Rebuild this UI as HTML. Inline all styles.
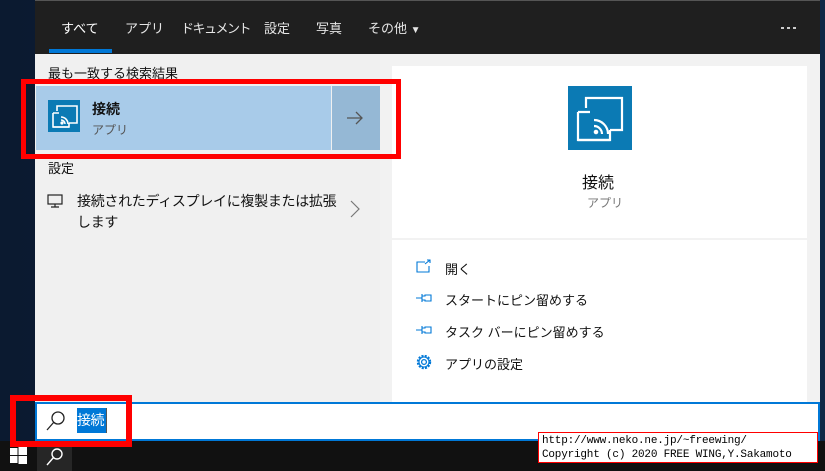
<!DOCTYPE html>
<html><head><meta charset="utf-8"><style>
*{margin:0;padding:0;box-sizing:border-box}
body{width:825px;height:471px;overflow:hidden;position:relative;background:linear-gradient(90deg,#0b1a30,#0f2745);font-family:"Liberation Sans","Noto Sans CJK JP",sans-serif}
.a{position:absolute}
.top{left:35px;top:0;width:785px;height:54px;background:#1f1f1f;border-top:1px solid #555}
.tab{position:absolute;top:17px;color:#e6e6e6;font-size:13px;white-space:nowrap}
.left{left:35px;top:54px;width:345px;height:350px;background:#f0f0f0}
.right{left:380px;top:54px;width:440px;height:350px;background:#f2f2f2}
.card{background:#fff}
.t{position:absolute;white-space:nowrap;color:#111}
</style></head><body>
<div class="a top">
 <div class="tab" style="left:26px;color:#fff">すべて</div>
 <div class="a" style="left:14px;top:48px;width:63px;height:4px;background:#0078d7"></div>
 <div class="tab" style="left:90px">アプリ</div>
 <div class="tab" style="left:146px;letter-spacing:-1.5px">ドキュメント</div>
 <div class="tab" style="left:229px">設定</div>
 <div class="tab" style="left:281px">写真</div>
 <div class="tab" style="left:333px">その他 <span style="font-size:10px">▼</span></div>
 <div class="a" style="left:746px;top:26px;width:3px;height:2px;background:#ccc;box-shadow:6px 0 #ccc,12px 0 #ccc"></div>
</div>
<div class="a left">
 <div class="t" style="left:13px;top:9px;font-size:13px">最も一致する検索結果</div>
 <div class="a" style="left:1px;top:32px;width:295px;height:64px;background:#a8cbe9"></div>
 <div class="a" style="left:297px;top:32px;width:48px;height:64px;background:#95b8d5"></div>
 <svg class="a" style="left:310px;top:55px" width="20" height="18" viewBox="0 0 20 18"><path d="M2 9H17M11 3l6 6-6 6" stroke="#555" stroke-width="1.3" fill="none"/></svg>
 <div class="a" style="left:13px;top:46px;width:32px;height:32px;background:#0b7ab4">
  <svg width="32" height="32" viewBox="0 0 32 32" fill="none" stroke="#fff" stroke-width="1.6"><path d="M9 11V6H29V23H21"/><path d="M5 13V27H21V23"/><path d="M5 13H11M5 27H21"/><path d="M13 17a7 7 0 0 1 7 7M13 20a4 4 0 0 1 4 4"/><circle cx="14" cy="23" r=".8" fill="#fff"/></svg>
 </div>
 <div class="t" style="left:57px;top:45px;font-size:14px;font-weight:bold">接続</div>
 <div class="t" style="left:57px;top:67px;font-size:12px;color:#555">アプリ</div>
 <div class="t" style="left:13px;top:104px;font-size:13px">設定</div>
 <svg class="a" style="left:12px;top:140px" width="16" height="14" viewBox="0 0 16 14" fill="none" stroke="#222" stroke-width="1.2"><rect x="1" y="1" width="14" height="9"/><path d="M8 10v3M4 13h8"/></svg>
 <div class="t" style="left:42px;top:137px;font-size:14px;line-height:21px;letter-spacing:-0.3px">接続されたディスプレイに複製または拡張<br>します</div>
 <svg class="a" style="left:315px;top:146px" width="10" height="18" viewBox="0 0 10 18"><path d="M1 1l8 8-8 8" stroke="#777" stroke-width="1.2" fill="none"/></svg>
</div>
<div class="a right">
 <div class="a card" style="left:12px;top:12px;width:415px;height:172px">
  <div class="a" style="left:176px;top:20px;width:64px;height:64px;background:#0b7ab4">
   <svg width="64" height="64" viewBox="0 0 32 32" fill="none" stroke="#fff" stroke-width="1.1"><path d="M9 11V6H27V22H21"/><path d="M5 13V27H21V22"/><path d="M5 13H11M5 27H21"/><path d="M13 17a7 7 0 0 1 7 7M13 20a4 4 0 0 1 4 4"/><circle cx="14" cy="23" r=".6" fill="#fff"/></svg>
  </div>
  <div class="t" style="left:190px;top:103px;font-size:16px">接続</div>
  <div class="t" style="left:195px;top:128px;font-size:12px;color:#777">アプリ</div>
 </div>
 <div class="a card" style="left:12px;top:186px;width:415px;height:164px">
  <svg class="a" style="left:24px;top:19px" width="16" height="14" viewBox="0 0 16 14" fill="none" stroke="#0078d7" stroke-width="1.1"><path d="M9 3H1V13H13V7"/><path d="M9 5L14 1M11 1h3v3"/></svg>
  <div class="t" style="left:53px;top:19px;font-size:13px">開く</div>
  <svg class="a" style="left:24px;top:53px" width="16" height="10" viewBox="0 0 16 10" fill="none" stroke="#0078d7" stroke-width="1.1"><path d="M0 5H6M6 1V9M6 3L9 3 9 2H15V8H9V7H6"/></svg>
  <div class="t" style="left:53px;top:50px;font-size:13px">スタートにピン留めする</div>
  <svg class="a" style="left:24px;top:85px" width="16" height="10" viewBox="0 0 16 10" fill="none" stroke="#0078d7" stroke-width="1.1"><path d="M0 5H6M6 1V9M6 3L9 3 9 2H15V8H9V7H6"/></svg>
  <div class="t" style="left:53px;top:82px;font-size:13px">タスク バーにピン留めする</div>
  <svg class="a" style="left:24px;top:114px" width="16" height="16" viewBox="0 0 16 16" fill="none" stroke="#0078d7" stroke-width="1.3"><circle cx="8" cy="8" r="2.6"/><circle cx="8" cy="8" r="6" stroke-width="2.4" stroke-dasharray="2 1.2"/><circle cx="8" cy="8" r="5" fill="#fff" stroke="none"/><circle cx="8" cy="8" r="5" stroke-width="1.1"/><circle cx="8" cy="8" r="2.4"/></svg>
  <div class="t" style="left:53px;top:114px;font-size:13px">アプリの設定</div>
 </div>
</div>
<div class="a" style="left:35px;top:402px;width:785px;height:39px;background:#fff;border:2px solid #0078d7"></div>
<svg class="a" style="left:45px;top:410px" width="22" height="22" viewBox="0 0 22 22" fill="none" stroke="#222" stroke-width="1.3"><circle cx="13" cy="8" r="6"/><path d="M9 12L2 20"/></svg>
<div class="a" style="left:77px;top:408px;width:29px;height:25px;background:#0078d7;color:#fff;font-size:14px;line-height:25px;white-space:nowrap;overflow:hidden;letter-spacing:-0.5px">接続</div>
<div class="a" style="left:106px;top:408px;width:1px;height:25px;background:#555"></div>
<div class="a" style="left:0;top:441px;width:825px;height:30px;background:#111"></div>
<svg class="a" style="left:10px;top:447px" width="17" height="17" viewBox="0 0 17 17" fill="#fff"><rect x="0" y="1" width="7.5" height="7"/><rect x="8.5" y="0" width="8.5" height="8"/><rect x="0" y="9" width="7.5" height="7"/><rect x="8.5" y="9" width="8.5" height="8"/></svg>
<div class="a" style="left:37px;top:441px;width:35px;height:30px;background:#262626"></div>
<svg class="a" style="left:45px;top:447px" width="20" height="20" viewBox="0 0 20 20" fill="none" stroke="#fff" stroke-width="1.4"><circle cx="12" cy="7" r="5"/><path d="M8.5 10.5L2 18"/></svg>
<div class="a" style="left:21px;top:79px;width:380px;height:80px;border:5px solid #f00"></div>
<div class="a" style="left:10px;top:395px;width:122px;height:52px;border:6px solid #f00"></div>
<div class="a" style="left:538px;top:432px;width:280px;height:31px;background:#fff;border:1px solid #f00;font-family:'Liberation Mono',monospace;font-size:11px;line-height:14px;padding:1px 3px;color:#000;white-space:nowrap;letter-spacing:-0.2px">http://www.neko.ne.jp/~freewing/<br>Copyright (c) 2020 FREE WING,Y.Sakamoto</div>
</body></html>
